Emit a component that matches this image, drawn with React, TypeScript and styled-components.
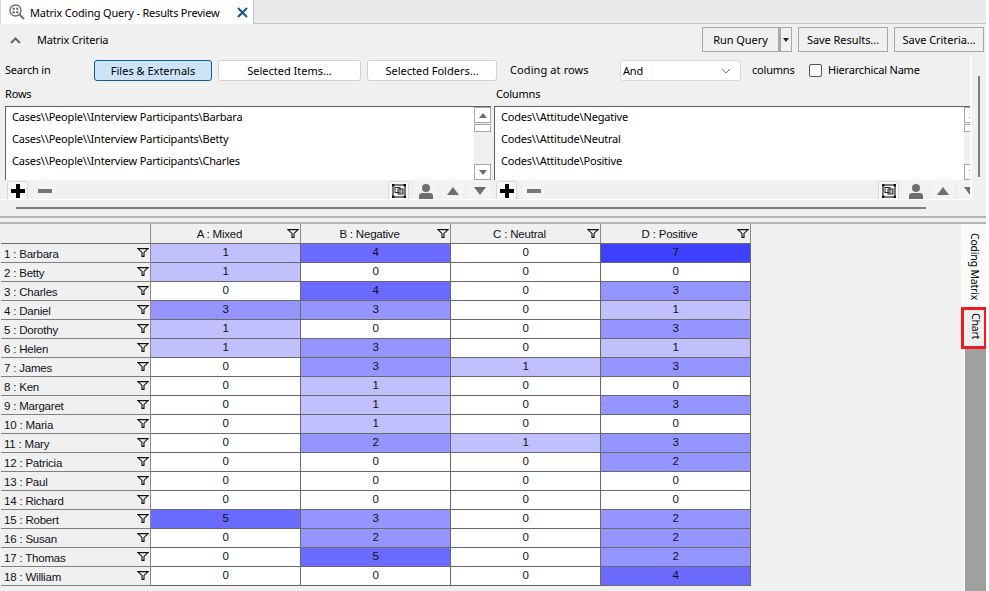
import { Fragment } from "react";
import styled, { createGlobalStyle } from "styled-components";

const GlobalStyle = createGlobalStyle`
  html, body {
    margin: 0;
    padding: 0;
    background: #ffffff;
  }
  * {
    box-sizing: border-box;
  }
`;

const uiFont = `"Noto Sans", "Open Sans", sans-serif`;
const gridFont = `"Liberation Sans", Arial, sans-serif`;

const HEAT: Record<number, string> = {
  0: "#ffffff",
  1: "#c0c0ff",
  2: "#9595ff",
  3: "#9595ff",
  4: "#6a6aff",
  5: "#6a6aff",
  7: "#4040ff",
};

const COLUMNS = ["A : Mixed", "B : Negative", "C : Neutral", "D : Positive"];

const ROWS: [string, number[]][] = [
  ["1 : Barbara", [1, 4, 0, 7]],
  ["2 : Betty", [1, 0, 0, 0]],
  ["3 : Charles", [0, 4, 0, 3]],
  ["4 : Daniel", [3, 3, 0, 1]],
  ["5 : Dorothy", [1, 0, 0, 3]],
  ["6 : Helen", [1, 3, 0, 1]],
  ["7 : James", [0, 3, 1, 3]],
  ["8 : Ken", [0, 1, 0, 0]],
  ["9 : Margaret", [0, 1, 0, 3]],
  ["10 : Maria", [0, 1, 0, 0]],
  ["11 : Mary", [0, 2, 1, 3]],
  ["12 : Patricia", [0, 0, 0, 2]],
  ["13 : Paul", [0, 0, 0, 0]],
  ["14 : Richard", [0, 0, 0, 0]],
  ["15 : Robert", [5, 3, 0, 2]],
  ["16 : Susan", [0, 2, 0, 2]],
  ["17 : Thomas", [0, 5, 0, 2]],
  ["18 : William", [0, 0, 0, 4]],
];

const Page = styled.div`
  width: 986px;
  height: 591px;
  overflow: hidden;
  background: #f0f0f0;
  color: #000;
  font-family: ${uiFont};
  font-size: 11px;
  letter-spacing: -0.2px;
`;

const TabBar = styled.div`
  height: 24px;
  background: #e8e9ea;
  border-bottom: 1px solid #c4c4c4;
`;

const Tab = styled.div`
  width: 254px;
  height: 24px;
  background: #fff;
  border-right: 1px solid #c4c4c4;
  border-left: 1px solid #d8d8d8;
  display: flex;
  align-items: center;
  padding-left: 8px;
`;

const TabTitle = styled.span`
  margin-left: 5px;
  width: 207px;
  white-space: nowrap;
`;

const CriteriaHeader = styled.div`
  height: 32px;
  display: flex;
  align-items: flex-start;
  padding: 3px 2px 0 10px;
`;

const CriteriaTitle = styled.span`
  margin: 5px auto 0 16px;
`;

const Chevron = styled.svg`
  margin-top: 10px;
`;

const ActionButton = styled.button<{ $width: number; $gap?: number }>`
  width: ${(p) => p.$width}px;
  height: 25px;
  margin-left: ${(p) => p.$gap ?? 6}px;
  padding: 0;
  background: #f0f0f0;
  border: 1px solid #a8a8a8;
  font: inherit;
  letter-spacing: -0.05px;
  color: inherit;
`;

const SplitArrow = styled(ActionButton)`
  display: flex;
  align-items: center;
  justify-content: center;
  border-left: 2px solid #a8a8a8;
`;

const UpperArea = styled.div`
  display: flex;
  height: 144px;
`;

const Viewport = styled.div`
  width: 972px;
  flex: none;
  overflow: hidden;
  padding: 4px 0 0 5px;
  border-right: 2px solid #fff;
  border-bottom: 1px solid #fff;
`;

const Gutter = styled.div`
  flex: 1;
  padding: 20px 0 0 6px;
`;

const VerticalBar = styled.div`
  width: 2px;
  height: 101px;
  background: #808080;
`;

const SearchRow = styled.div`
  display: flex;
  align-items: center;
  height: 21px;
  width: 960px;
`;

const ScopeButton = styled.button<{ $width: number; $active?: boolean }>`
  width: ${(p) => p.$width}px;
  height: 21px;
  margin-right: 6px;
  padding: 0;
  flex: none;
  border-radius: 3px;
  border: 1px solid ${(p) => (p.$active ? "#0f5c9c" : "#d0d0d0")};
  background: ${(p) => (p.$active ? "#cce4f7" : "#fff")};
  font: inherit;
  letter-spacing: 0;
  color: inherit;
`;

const InlineLabel = styled.span<{ $width: number; $inset?: number }>`
  width: ${(p) => p.$width}px;
  padding-left: ${(p) => p.$inset ?? 0}px;
  margin-top: -2px;
  flex: none;
  white-space: nowrap;
`;

const CodingLabel = styled(InlineLabel)`
  letter-spacing: 0.1px;
`;

const FakeSelect = styled.div`
  width: 121px;
  height: 21px;
  margin-right: 11px;
  flex: none;
  display: flex;
  align-items: center;
  justify-content: space-between;
  padding: 0 9px 0 2px;
  background: #fff;
  border: 1px solid #d8d8d8;
  border-radius: 3px;
`;

const CheckBox = styled.span`
  width: 13px;
  height: 13px;
  flex: none;
  margin-right: 6px;
  background: #fff;
  border: 1px solid #555;
  border-radius: 2px;
`;

const ListGrid = styled.div`
  display: grid;
  grid-template-columns: 486px 487px;
  column-gap: 3px;
  width: 976px;
`;

const ListLabel = styled.div<{ $inset?: number }>`
  height: 25px;
  padding: 5px 0 0 ${(p) => p.$inset ?? 0}px;
`;

const ListBox = styled.div`
  height: 74px;
  display: flex;
  background: #fff;
  border-top: 1px solid #606060;
  border-left: 1px solid #606060;
`;

const ListItems = styled.div`
  flex: 1;
  padding: 1px 0 0 6px;
`;

const ListItem = styled.div`
  height: 22px;
  line-height: 17px;
  white-space: nowrap;
`;

const ScrollTrack = styled.div`
  width: 17px;
  flex: none;
  display: flex;
  flex-direction: column;
  background: #f0f0f0;
`;

const ScrollButton = styled.div`
  height: 16px;
  background: #fff;
  border: 1px solid #a8a8a8;
  display: flex;
  align-items: center;
  justify-content: center;
`;

const ScrollThumb = styled.div`
  height: 8px;
  margin: 1px 0 auto;
  background: #fff;
  border: 1px solid #a8a8a8;
`;

const ListTools = styled.div`
  height: 19px;
  display: flex;
  gap: 6px;
  padding: 1px 1px 0 2px;
  overflow: hidden;
`;

const ToolButton = styled.div<{ $outlined?: boolean; $push?: boolean }>`
  width: 21px;
  height: 20px;
  flex: none;
  margin-left: ${(p) => (p.$push ? "auto" : "0")};
  display: flex;
  align-items: center;
  justify-content: center;
  border-radius: 3px 3px 0 0;
  background: ${(p) => (p.$outlined ? "#f8f8f8" : "#f3f3f3")};
  border: 1px solid ${(p) => (p.$outlined ? "#d8d8d8" : "#f6f6f6")};
`;

const ScrollStrip = styled.div`
  height: 16px;
  padding: 7px 0 0 16px;
`;

const HorizontalBar = styled.div`
  width: 910px;
  height: 2px;
  background: #808080;
`;

const Rule = styled.div`
  height: 2px;
  background: #b4b4b4;
`;

const Spacer = styled.div`
  height: 4px;
`;

const ResultsArea = styled.div`
  display: flex;
  justify-content: space-between;
  height: 368px;
`;

const MatrixTable = styled.div`
  display: grid;
  grid-template-columns: 150px repeat(4, 150px);
  grid-template-rows: 20px;
  grid-auto-rows: 19px;
  align-content: start;
  margin-left: 1px;
  font-family: ${gridFont};
  font-size: 11.5px;
  color: #101018;
`;

const HeaderCell = styled.div`
  position: relative;
  display: flex;
  align-items: center;
  justify-content: center;
  padding-right: 12px;
  background: #f0f0f0;
  border-right: 1px solid #8a8a8a;
  border-bottom: 1px solid #696969;
`;

const RowHeader = styled.div`
  display: flex;
  align-items: flex-end;
  justify-content: space-between;
  padding: 0 1px 0 3px;
  background: #f0f0f0;
  border-right: 1px solid #8a8a8a;
  border-bottom: 1px solid #808080;
  line-height: 15px;
`;

const ValueCell = styled.div<{ $bg: string }>`
  display: flex;
  justify-content: center;
  background: ${(p) => p.$bg};
  border-right: 1px solid #696969;
  border-bottom: 1px solid #696969;
  line-height: 16px;
`;

const FilterSlot = styled.span`
  position: absolute;
  right: 1px;
  top: 5px;
  line-height: 0;
`;

const FilterInline = styled.span`
  align-self: center;
  line-height: 0;
  margin-top: -1px;
`;

const SideRail = styled.div`
  width: 23px;
  height: 368px;
  flex: none;
  display: flex;
  flex-direction: column;
  background: #a0a0a0;
  border-left: 2px solid #f8f8f8;
  font-size: 10.5px;
`;

const SideTab = styled.div<{ $marked?: boolean; $height: number }>`
  width: ${(p) => (p.$marked ? 26 : 25)}px;
  height: ${(p) => p.$height}px;
  margin-left: -4px;
  flex: none;
  writing-mode: vertical-rl;
  display: flex;
  align-items: center;
  white-space: nowrap;
  padding-top: ${(p) => (p.$marked ? 3 : 9)}px;
  padding-left: 3px;
  background: ${(p) => (p.$marked ? "#f0f0f0" : "#fafafa")};
  border: ${(p) => (p.$marked ? "3px solid #ed1c24" : "none")};
`;

const Funnel = () => (
  <svg width="12" height="9" viewBox="0 0 12 9">
    <path d="M0.8 0.6 H11.2 L7 4.4 V8.4 H5 V4.4 Z" fill="none" stroke="#111" strokeWidth="1.1" />
  </svg>
);

const Triangle = ({ down, color = "#6e6e6e", width = 12, height = 8 }: { down?: boolean; color?: string; width?: number; height?: number }) => (
  <svg width={width} height={height} viewBox="0 0 10 6" preserveAspectRatio="none">
    <path d={down ? "M0 0 H10 L5 6 Z" : "M0 6 H10 L5 0 Z"} fill={color} />
  </svg>
);

const PlusIcon = () => (
  <svg width="14" height="14" viewBox="0 0 14 14">
    <path d="M5 0 H9 V5 H14 V9 H9 V14 H5 V9 H0 V5 H5 Z" fill="#000" />
  </svg>
);

const MinusIcon = () => (
  <svg width="14" height="4" viewBox="0 0 14 4">
    <rect width="14" height="4" fill="#777" />
  </svg>
);

const FrameIcon = () => (
  <svg width="14" height="14" viewBox="0 0 14 14" fill="none" stroke="#222">
    <rect x="1" y="1" width="12" height="12" strokeWidth="1.2" />
    <rect x="3" y="3.5" width="5" height="5" />
    <rect x="6" y="5" width="5" height="5" fill="#888" fillOpacity="0.5" />
    <g fill="#111" stroke="none">
      <rect width="2.4" height="2.4" />
      <rect x="11.6" width="2.4" height="2.4" />
      <rect y="11.6" width="2.4" height="2.4" />
      <rect x="11.6" y="11.6" width="2.4" height="2.4" />
    </g>
  </svg>
);

const PersonIcon = () => (
  <svg width="14" height="15" viewBox="0 0 14 15" fill="#6e6e6e">
    <circle cx="7" cy="4" r="4" />
    <path d="M0 15 V12 Q0 9 3 9 H11 Q14 9 14 12 V15 Z" />
  </svg>
);

const QueryIcon = () => (
  <svg width="16" height="16" viewBox="0 0 16 16" fill="none">
    <circle cx="6.5" cy="6.5" r="5.5" stroke="#707070" strokeWidth="1.4" />
    <path d="M10.5 10.5 L15 15" stroke="#707070" strokeWidth="2" />
    <g fill="#707070">
      <circle cx="4.7" cy="4.7" r="1.2" />
      <circle cx="8.3" cy="4.7" r="1.2" />
      <circle cx="4.7" cy="8.3" r="1.2" />
      <circle cx="8.3" cy="8.3" r="1.2" />
    </g>
  </svg>
);

const CloseIcon = () => (
  <svg width="11" height="11" viewBox="0 0 11 11">
    <path d="M1 1 L10 10 M10 1 L1 10" stroke="#14588f" strokeWidth="2" />
  </svg>
);

const CriteriaList = ({ label, items, inset }: { label: string; items: string[]; inset?: number }) => (
  <div>
    <ListLabel $inset={inset}>{label}</ListLabel>
    <ListBox>
      <ListItems>
        {items.map((item) => (
          <ListItem key={item}>{item}</ListItem>
        ))}
      </ListItems>
      <ScrollTrack>
        <ScrollButton>
          <Triangle width={8} height={5} />
        </ScrollButton>
        <ScrollThumb />
        <ScrollButton>
          <Triangle width={8} height={5} down />
        </ScrollButton>
      </ScrollTrack>
    </ListBox>
    <ListTools>
      <ToolButton $outlined>
        <PlusIcon />
      </ToolButton>
      <ToolButton>
        <MinusIcon />
      </ToolButton>
      <ToolButton $outlined $push>
        <FrameIcon />
      </ToolButton>
      <ToolButton>
        <PersonIcon />
      </ToolButton>
      <ToolButton>
        <Triangle />
      </ToolButton>
      <ToolButton>
        <Triangle down />
      </ToolButton>
    </ListTools>
  </div>
);

export default function App() {
  return (
    <Page>
      <GlobalStyle />
      <TabBar>
        <Tab>
          <QueryIcon />
          <TabTitle>Matrix Coding Query - Results Preview</TabTitle>
          <CloseIcon />
        </Tab>
      </TabBar>
      <CriteriaHeader>
        <Chevron width="11" height="7" viewBox="0 0 11 7">
          <path d="M1 6 L5.5 1.5 L10 6" fill="none" stroke="#666" strokeWidth="2" />
        </Chevron>
        <CriteriaTitle>Matrix Criteria</CriteriaTitle>
        <ActionButton $width={77}>Run Query</ActionButton>
        <SplitArrow $width={13} $gap={0}>
          <Triangle width={6} height={4} color="#222" down />
        </SplitArrow>
        <ActionButton $width={90}>Save Results...</ActionButton>
        <ActionButton $width={90}>Save Criteria...</ActionButton>
      </CriteriaHeader>
      <UpperArea>
        <Viewport>
          <SearchRow>
            <InlineLabel $width={89}>Search in</InlineLabel>
            <ScopeButton $width={118} $active>
              Files &amp; Externals
            </ScopeButton>
            <ScopeButton $width={143}>Selected Items...</ScopeButton>
            <ScopeButton $width={130}>Selected Folders...</ScopeButton>
            <CodingLabel $width={117} $inset={7}>
              Coding at rows
            </CodingLabel>
            <FakeSelect>
              And
              <svg width="10" height="6" viewBox="0 0 10 6">
                <path d="M1 1 L5 5 L9 1" fill="none" stroke="#777" />
              </svg>
            </FakeSelect>
            <InlineLabel $width={57}>columns</InlineLabel>
            <CheckBox />
            <InlineLabel $width={100}>Hierarchical Name</InlineLabel>
          </SearchRow>
          <ListGrid>
            <CriteriaList
              label="Rows"
              items={[
                "Cases\\\\People\\\\Interview Participants\\Barbara",
                "Cases\\\\People\\\\Interview Participants\\Betty",
                "Cases\\\\People\\\\Interview Participants\\Charles",
              ]}
            />
            <CriteriaList
              label="Columns"
              inset={2}
              items={["Codes\\\\Attitude\\Negative", "Codes\\\\Attitude\\Neutral", "Codes\\\\Attitude\\Positive"]}
            />
          </ListGrid>
        </Viewport>
        <Gutter>
          <VerticalBar />
        </Gutter>
      </UpperArea>
      <ScrollStrip>
        <HorizontalBar />
      </ScrollStrip>
      <Rule />
      <Spacer />
      <Rule />
      <ResultsArea>
        <MatrixTable>
          <HeaderCell />
          {COLUMNS.map((col) => (
            <HeaderCell key={col}>
              {col}
              <FilterSlot>
                <Funnel />
              </FilterSlot>
            </HeaderCell>
          ))}
          {ROWS.map(([name, values]) => (
            <Fragment key={name}>
              <RowHeader>
                {name}
                <FilterInline>
                  <Funnel />
                </FilterInline>
              </RowHeader>
              {values.map((value, i) => (
                <ValueCell key={i} $bg={HEAT[value]}>
                  {value}
                </ValueCell>
              ))}
            </Fragment>
          ))}
        </MatrixTable>
        <SideRail>
          <SideTab $height={83}>Coding Matrix</SideTab>
          <SideTab $marked $height={42}>
            Chart
          </SideTab>
        </SideRail>
      </ResultsArea>
    </Page>
  );
}
